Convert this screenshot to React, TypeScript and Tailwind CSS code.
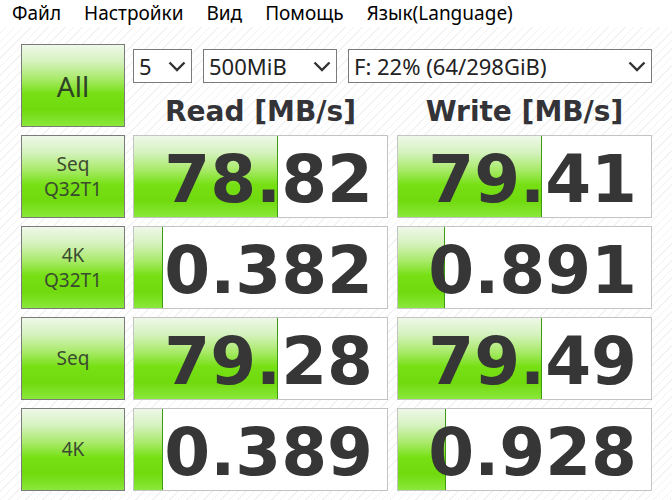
import React from "react";

const rows = [
  { label: ["Seq", "Q32T1"], read: "78.82", write: "79.41" },
  { label: ["4K", "Q32T1"], read: "0.382", write: "0.891" },
  { label: ["Seq"], read: "79.28", write: "79.49" },
  { label: ["4K"], read: "0.389", write: "0.928" },
];

const green =
  "bg-[linear-gradient(to_bottom,#eef8e8_0%,#d6f2c0_20%,#a8ea68_42%,#76e014_60%,#70da0e_80%,#8ae83a_100%)]";

function fillWidth(v: string) {
  const n = parseFloat(v);
  const w = (Math.log10(n) + 1) * 49.8;
  return Math.max(0, Math.min(253, w));
}

function Chevron() {
  return (
    <svg width="18" height="11" viewBox="0 0 18 11" className="shrink-0">
      <polyline points="1.5,1.5 9,9 16.5,1.5" fill="none" stroke="#333" strokeWidth="2.4" />
    </svg>
  );
}

function Select({ w, text }: { w: string; text: string }) {
  return (
    <div
      className={`${w} h-[34px] border border-[#7a7a7a] bg-white flex items-center justify-between pl-[5px] pr-[5px] text-[22px] leading-[32px] text-[#222] font-['Noto_Sans',sans-serif]`}
    >
      <span>{text}</span>
      <Chevron />
    </div>
  );
}

function ValueCell({ value }: { value: string }) {
  const w = fillWidth(value);
  return (
    <div className="relative w-[255px] h-[83px] border border-[#c3c3c3] bg-white overflow-hidden">
      <div
        className={`absolute left-0 top-0 bottom-0 ${green} border-r border-[#3d9a12]`}
        style={{ width: `${w}px` }}
      />
      <div className="relative h-full flex items-center justify-end pr-[14px] pt-[6px] font-bold text-[66px] leading-none text-[#363636] font-['DejaVu_Sans',sans-serif]">
        {value}
      </div>
    </div>
  );
}

function LabelButton({ lines }: { lines: string[] }) {
  return (
    <div
      className={`w-[104px] h-[83px] border border-[#7a7a7a] ${green} flex flex-col items-center justify-center text-[19px] leading-[25px] text-[#3a4a30] font-['Noto_Sans',sans-serif]`}
    >
      {lines.map((l) => (
        <span key={l}>{l}</span>
      ))}
    </div>
  );
}

export default function App() {
  return (
    <div className="w-[672px] h-[500px] overflow-hidden bg-[repeating-linear-gradient(135deg,#ffffff_0px,#ffffff_5px,#f2f2f2_5px,#f2f2f2_6px)]">
      <div className="h-[27px] bg-white flex items-center pl-[12px] gap-[23px] text-[19px] leading-[27px] text-[#000] font-['Noto_Sans',sans-serif]">
        <span>Файл</span>
        <span>Настройки</span>
        <span>Вид</span>
        <span>Помощь</span>
        <span>Язык(Language)</span>
      </div>

      <div className="flex pl-[21px] pt-[17px]">
        <div
          className={`w-[104px] h-[83px] border border-[#7a7a7a] ${green} flex items-center justify-center text-[28px] text-[#2f4226] font-['Noto_Sans',sans-serif]`}
        >
          All
        </div>
        <div className="ml-[8px] flex flex-col">
          <div className="flex mt-[5px] gap-[11px]">
            <Select w="w-[59px]" text="5" />
            <Select w="w-[134px]" text="500MiB" />
            <Select w="w-[304px]" text="F: 22% (64/298GiB)" />
          </div>
          <div className="flex mt-[15px] gap-[9px] font-bold text-[28px] leading-[28px] text-[#333338] font-['DejaVu_Sans',sans-serif]">
            <div className="w-[255px] text-center">Read [MB/s]</div>
            <div className="w-[255px] text-center">Write [MB/s]</div>
          </div>
        </div>
      </div>

      <div className="flex flex-col gap-[8px] pl-[21px] mt-[8px]">
        {rows.map((r, i) => (
          <div key={i} className="flex">
            <LabelButton lines={r.label} />
            <div className="ml-[8px]">
              <ValueCell value={r.read} />
            </div>
            <div className="ml-[9px]">
              <ValueCell value={r.write} />
            </div>
          </div>
        ))}
      </div>
    </div>
  );
}
